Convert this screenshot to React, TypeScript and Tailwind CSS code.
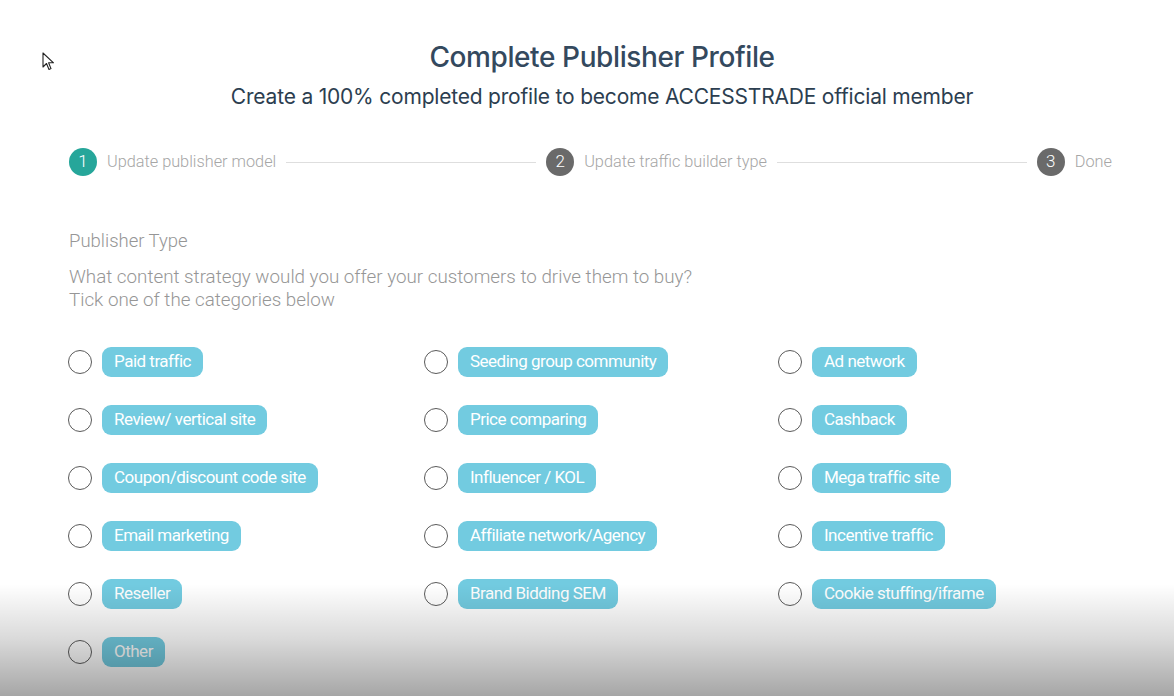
import React from "react";

const categories = [
  ["Paid traffic", "Seeding group community", "Ad network"],
  ["Review/ vertical site", "Price comparing", "Cashback"],
  ["Coupon/discount code site", "Influencer / KOL", "Mega traffic site"],
  ["Email marketing", "Affiliate network/Agency", "Incentive traffic"],
  ["Reseller", "Brand Bidding SEM", "Cookie stuffing/iframe"],
  ["Other", "", ""],
];

function Step({ n, label, active }: { n: number; label: string; active?: boolean }) {
  return (
    <div className="flex items-center gap-[10px] shrink-0">
      <span
        className={`w-[28px] h-[28px] rounded-full flex items-center justify-center text-white text-[17px] font-light ${
          active ? "bg-[#26a69a]" : "bg-[#6a6a6a]"
        }`}
      >
        {n}
      </span>
      <span className="text-[16.3px] font-light text-[#a6a6a6]">{label}</span>
    </div>
  );
}

function Option({ label }: { label: string }) {
  if (!label) return <div />;
  return (
    <label className="flex items-center gap-[10px] h-[30px]">
      <span className="w-[24px] h-[24px] rounded-full border-[1.5px] border-[#5a5a5a] shrink-0" />
      <span className="h-[30px] px-[12px] rounded-[9px] bg-[#72cbe0] text-white text-[17px] tracking-[-0.5px] flex items-center">
        {label}
      </span>
    </label>
  );
}

export default function App() {
  return (
    <div
      className="relative w-full min-h-[696px] h-[696px] overflow-hidden bg-white"
      style={{ fontFamily: "Roboto, 'Liberation Sans', sans-serif" }}
    >
      {/* mouse pointer */}
      <svg className="absolute left-[42px] top-[52px]" width="14" height="20" viewBox="0 0 14 20">
        <path d="M1 1 L1 15 L4.5 11.5 L7 17.5 L9 16.6 L6.6 10.8 L11.5 10.8 Z" fill="white" stroke="#222" strokeWidth="1.1" strokeLinejoin="round" />
      </svg>

      <div className="flex flex-col items-center pt-[39px] pl-[30px]" style={{ fontFamily: "Inter, 'Liberation Sans', sans-serif" }}>
        <h1 className="text-[28px] leading-[36px] font-medium text-[#34495e] tracking-[-0.4px]">
          Complete Publisher Profile
        </h1>
        <p className="mt-[8px] text-[21px] leading-[28px] text-[#2c3e50] tracking-[-0.2px]">
          Create a 100% completed profile to become ACCESSTRADE official member
        </p>
      </div>

      <div className="mt-[37px] pl-[69px] pr-[62px] flex items-center">
        <Step n={1} label="Update publisher model" active />
        <div className="flex-1 h-px bg-[#dedede] mx-[10px]" />
        <Step n={2} label="Update traffic builder type" />
        <div className="flex-1 h-px bg-[#dedede] mx-[10px]" />
        <Step n={3} label="Done" />
      </div>

      <div className="pl-[69px] mt-[53px]">
        <div className="text-[18.5px] leading-[24px] font-light text-[#969696]">Publisher Type</div>
        <div className="mt-[13px] text-[18.8px] leading-[23px] font-light text-[#969696]">
          What content strategy would you offer your customers to drive them to buy?
          <br />
          Tick one of the categories below
        </div>
      </div>

      <div className="pl-[68px] mt-[35px] grid grid-cols-[356px_354px_1fr] gap-y-[28px]">
        {categories.flat().map((c, i) => (
          <Option key={i} label={c} />
        ))}
      </div>

      {/* video fade overlay */}
      <div className="absolute left-0 right-0 bottom-0 h-[112px] bg-gradient-to-b from-black/0 via-black/15 to-black/35 pointer-events-none" />
    </div>
  );
}
